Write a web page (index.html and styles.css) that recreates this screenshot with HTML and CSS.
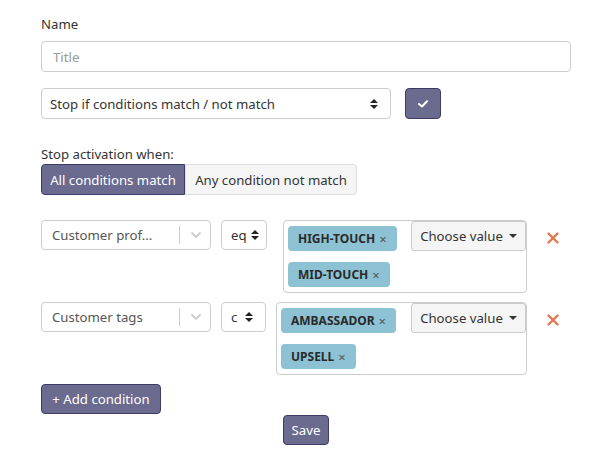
FILE: index.html
```html
<!DOCTYPE html>
<html>
<head>
<meta charset="utf-8">
<link rel="stylesheet" href="styles.css">
</head>
<body>
<div class="page">
  <div class="label">Name</div>
  <input class="input" type="text" placeholder="Title">
  <div class="row-top">
    <div class="select select-wide">
      <span class="select-text">Stop if conditions match / not match</span>
      <svg class="sort" width="8" height="10" viewBox="0 0 8 10"><path d="M0 4 L4 0 L8 4 Z M0 6 L4 10 L8 6 Z" fill="#222"/></svg>
    </div>
    <button class="btn btn-primary btn-check">
      <svg width="10" height="8" viewBox="0 0 10 8"><path d="M1 4 L4 6.5 L9 1.2" fill="none" stroke="#fff" stroke-width="2" stroke-linecap="round" stroke-linejoin="round"/></svg>
    </button>
  </div>
  <div class="label label-act">Stop activation when:</div>
  <div class="toggle">
    <button class="tg tg-active">All conditions match</button>
    <button class="tg">Any condition not match</button>
  </div>

  <div class="cond cond-1">
    <div class="field-select">
      <span class="fs-text">Customer prof...</span>
      <span class="fs-sep"></span>
      <svg class="chev" width="12" height="8" viewBox="0 0 12 8"><path d="M1.5 1.5 L6 6 L10.5 1.5" fill="none" stroke="#ccc" stroke-width="1.8"/></svg>
    </div>
    <div class="select op op-eq">
      <span class="select-text">eq</span>
      <svg class="sort" width="8" height="10" viewBox="0 0 8 10"><path d="M0 4 L4 0 L8 4 Z M0 6 L4 10 L8 6 Z" fill="#222"/></svg>
    </div>
    <div class="multi">
      <span class="tag">HIGH-TOUCH <span class="tag-x">×</span></span>
      <button class="choose">Choose value <span class="caret"></span></button>
      <span class="tag">MID-TOUCH <span class="tag-x">×</span></span>
    </div>
    <svg class="remove" width="12" height="12" viewBox="0 0 12 12"><path d="M1.5 1.5 L10.5 10.5 M10.5 1.5 L1.5 10.5" stroke="#e5764f" stroke-width="2.4" stroke-linecap="round"/></svg>
  </div>

  <div class="cond cond-2">
    <div class="field-select">
      <span class="fs-text">Customer tags</span>
      <span class="fs-sep"></span>
      <svg class="chev" width="12" height="8" viewBox="0 0 12 8"><path d="M1.5 1.5 L6 6 L10.5 1.5" fill="none" stroke="#ccc" stroke-width="1.8"/></svg>
    </div>
    <div class="select op op-c">
      <span class="select-text">c</span>
      <svg class="sort" width="8" height="10" viewBox="0 0 8 10"><path d="M0 4 L4 0 L8 4 Z M0 6 L4 10 L8 6 Z" fill="#222"/></svg>
    </div>
    <div class="multi">
      <span class="tag">AMBASSADOR <span class="tag-x">×</span></span>
      <button class="choose">Choose value <span class="caret"></span></button>
      <span class="tag">UPSELL <span class="tag-x">×</span></span>
    </div>
    <svg class="remove" width="12" height="12" viewBox="0 0 12 12"><path d="M1.5 1.5 L10.5 10.5 M10.5 1.5 L1.5 10.5" stroke="#e5764f" stroke-width="2.4" stroke-linecap="round"/></svg>
  </div>

  <button class="btn btn-primary btn-add">+ Add condition</button>
  <div class="save-wrap">
    <button class="btn btn-primary btn-save">Save</button>
  </div>
</div>
</body>
</html>
```

FILE: styles.css
```css
* { box-sizing: border-box; }
html, body { margin: 0; background: #fff; }
body {
  font-family: "Noto Sans", "Open Sans", sans-serif;
  font-size: 13.2px;
  color: #333;
}
.page {
  padding: 14px 43px 0 41px;
}
.label {
  line-height: 20px;
  height: 20px;
  margin-bottom: 7px;
}
.input {
  display: block;
  width: 100%;
  height: 31px;
  border: 1px solid #ccc;
  border-radius: 4px;
  padding: 0 11px;
  font: inherit;
  color: #555;
  outline: none;
}
.input::placeholder { color: #999; }
.row-top {
  display: flex;
  gap: 14px;
  margin-top: 16px;
}
.select {
  display: flex;
  align-items: center;
  height: 31px;
  border: 1px solid #ccc;
  border-radius: 4px;
  padding: 0 12px 0 8px;
  background: #fff;
  color: #333;
}
.select-wide { width: 350px; }
.select-text { flex: 1; white-space: nowrap; }
.sort { flex: none; }
.btn {
  font: inherit;
  border-radius: 4px;
  cursor: pointer;
}
.btn-primary {
  background: #6b6a8f;
  border: 1px solid #3e3c66;
  color: #fff;
}
.btn-check {
  width: 36px;
  height: 31px;
  display: flex;
  align-items: center;
  justify-content: center;
  padding: 0;
}
.label-act {
  margin-top: 25px;
  margin-bottom: 0;
}
.toggle {
  display: flex;
}
.tg {
  font: inherit;
  height: 31px;
  padding: 0;
  border: 1px solid #ddd;
  background: #f5f5f5;
  color: #333;
  border-radius: 0 4px 4px 0;
  width: 172px;
}
.tg-active {
  width: 144px;
  background: #6b6a8f;
  border-color: #3e3c66;
  color: #fff;
  border-radius: 4px 0 0 4px;
}
.cond {
  display: flex;
  align-items: flex-start;
  margin-top: 25px;
}
.cond-2 { margin-top: 9px; }
.field-select {
  display: flex;
  align-items: center;
  width: 170px;
  height: 30px;
  border: 1px solid #ccc;
  border-radius: 4px;
  padding: 0 8px 0 10px;
  color: #555;
}
.fs-text { flex: 1; white-space: nowrap; }
.fs-sep {
  width: 1px;
  height: 18px;
  background: #ccc;
  margin-right: 10px;
}
.op {
  height: 30px;
  margin-left: 10px;
  padding: 0 12px 0 9px;
}
.op .select-text { margin-right: 4px; }
.op-eq { width: 46px; margin-right: 16px; }
.op-c { width: 45px; margin-right: 10px; }
.multi {
  flex: 1;
  display: flex;
  flex-wrap: wrap;
  align-items: flex-start;
  row-gap: 6px;
  border: 1px solid #ccc;
  border-radius: 4px;
  padding: 0 0 5px 4px;
  min-height: 73px;
}
.tag {
  display: inline-flex;
  align-items: center;
  height: 25px;
  margin-top: 5px;
  padding: 0 10px;
  background: #8cc2d3;
  border-radius: 4px;
  font-size: 12px;
  font-weight: bold;
  color: #2a2a2a;
}
.tag-x {
  font-weight: normal;
  color: #555;
  margin-left: 4px;
  font-size: 13px;
}
.choose {
  margin-left: auto;
  width: 115px;
  height: 30px;
  font: inherit;
  color: #333;
  background: #f5f5f5;
  border: 1px solid #ccc;
  border-radius: 3px;
  padding: 0;
  display: flex;
  align-items: center;
  justify-content: center;
  gap: 6px;
}
.caret {
  width: 0;
  height: 0;
  border-left: 4px solid transparent;
  border-right: 4px solid transparent;
  border-top: 4px solid #333;
}
.remove {
  margin: 12px 12px 0 20px;
}
.btn-add {
  display: block;
  margin-top: 9px;
  height: 30px;
  width: 120px;
  padding: 0;
}
.save-wrap {
  display: flex;
  justify-content: center;
  margin-top: 1px;
}
.btn-save {
  width: 46px;
  height: 30px;
  padding: 0;
}
```
